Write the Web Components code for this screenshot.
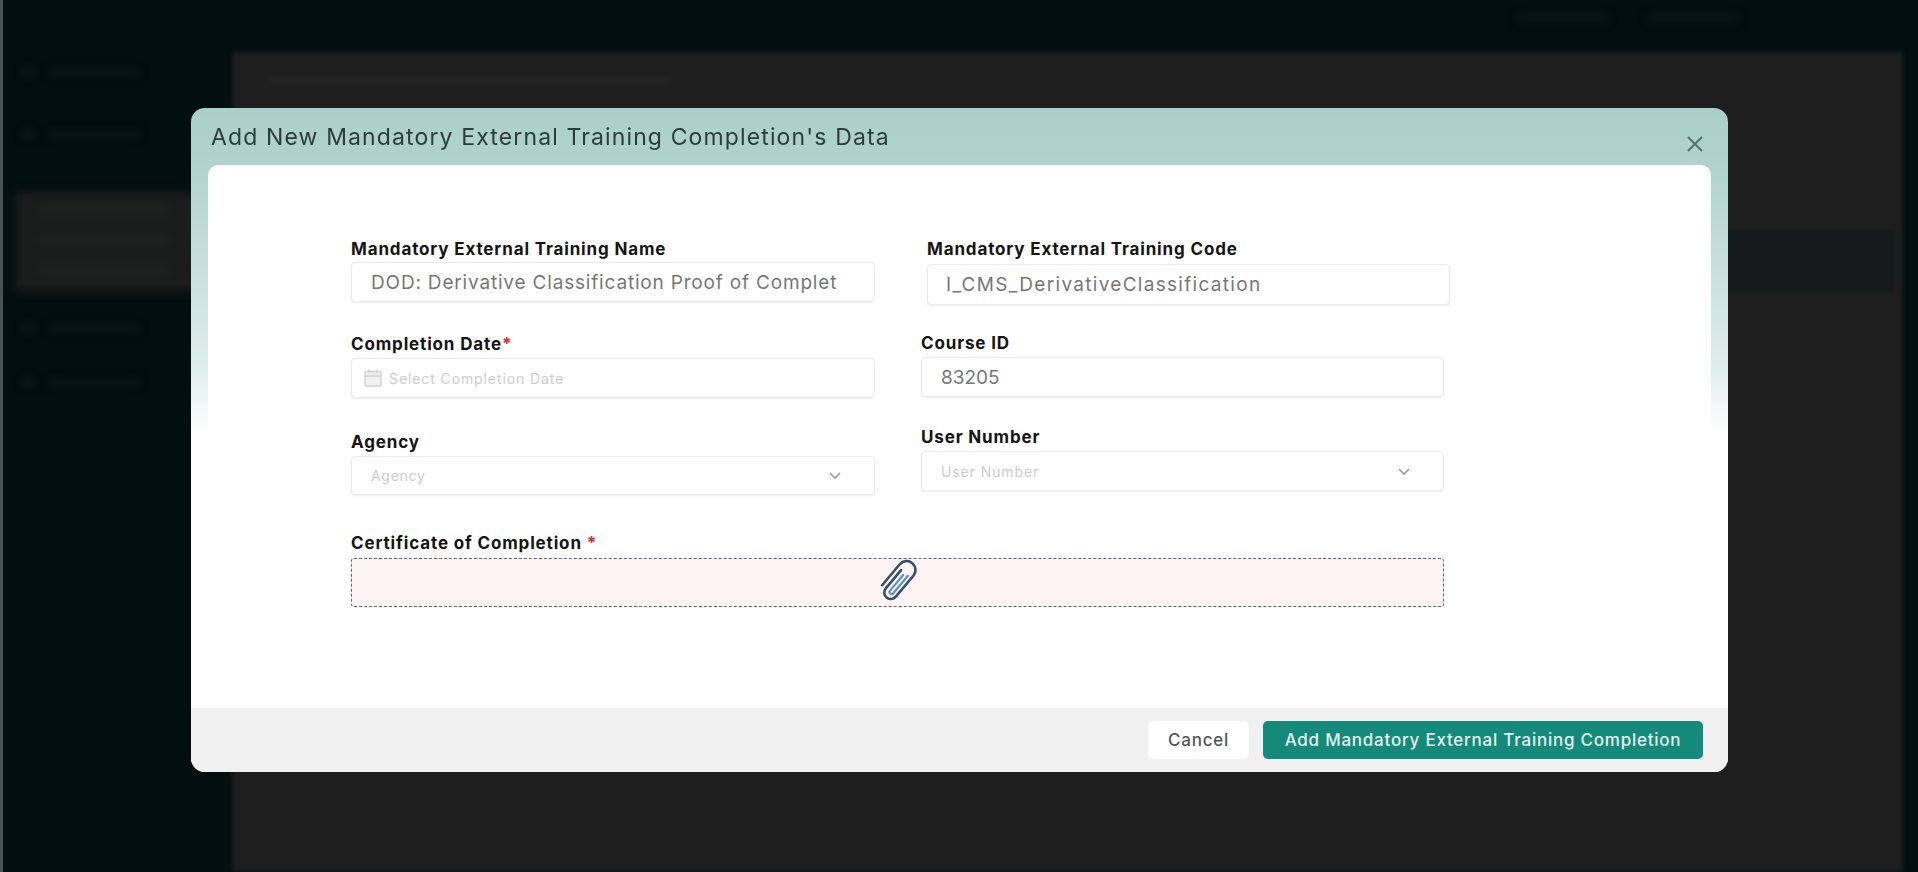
<!DOCTYPE html>
<html>
<head>
<meta charset="utf-8">
<title>Add New Mandatory External Training Completion's Data</title>
<style>
  html, body { margin: 0; height: 100%; background: #020e0f; overflow: hidden; }
  body { font-family: Inter, "Liberation Sans", sans-serif; }
</style>
</head>
<body>
<app-shell></app-shell>
<training-dialog>
  <form-field slot="left" label="Mandatory External Training Name" value="DOD: Derivative Classification Proof of Complet" style="--label-h:25px;--box-h:40px;--value-ls:.82px"></form-field>
  <form-field slot="left" label="Completion Date" required placeholder="Select Completion Date" icon="calendar" style="--top:30px;--box-h:40px;--ph-ls:.9px"></form-field>
  <form-field slot="left" label="Agency" placeholder="Agency" icon="chevron" style="--top:32px;--box-h:39px;--ph-ls:.7px"></form-field>

  <form-field slot="right" label="Mandatory External Training Code" value="I_CMS_DerivativeClassification" style="--label-h:27px;--box-h:41px;--left:6px;--right:-6px;--value-ls:1.3px;--pad:18px"></form-field>
  <form-field slot="right" label="Course ID" value="83205" style="--top:26px;--box-h:40px"></form-field>
  <form-field slot="right" label="User Number" placeholder="User Number" icon="chevron" style="--top:28px;--box-h:40px;--ph-ls:.9px"></form-field>
</training-dialog>

<script>
class AppShell extends HTMLElement {
  constructor() {
    super();
    this.attachShadow({ mode: "open" });
    this.shadowRoot.innerHTML = `<style>
      :host { display: flex; position: fixed; inset: 0; background: #020e0f; }
      .edge { width: 3px; background: #465353; }
      .side { width: 229px; padding-top: 66px; box-sizing: border-box; filter: blur(4px); }
      .nav { display: flex; align-items: center; gap: 16px; height: 12px; padding-left: 20px; }
      .nav i { width: 10px; height: 10px; border-radius: 50%; background: #0f1b1b; }
      .nav b { width: 90px; height: 7px; background: #0a1616; }
      .selected { margin: 52px 0 0 12px; height: 100px; background: #1b1c1c; padding-top: 14px; box-sizing: border-box; }
      .selected b { display: block; width: 130px; height: 8px; margin: 0 0 22px 24px; background: #212121; }
      .main { flex: 1; display: flex; flex-direction: column; }
      .top { height: 52px; display: flex; justify-content: flex-end; gap: 40px; padding: 14px 180px 0 0; box-sizing: border-box; filter: blur(4px); }
      .top b { width: 90px; height: 8px; background: #0a1616; }
      .panel { flex: 1; margin-right: 15px; background: #1e1e1e; padding: 24px 8px 0; filter: blur(2px); }
      .crumb { width: 400px; height: 10px; margin-left: 30px; background: #212121; }
      .band { height: 62px; margin-top: 144px; background: #171a1a; }
    </style>
    <div class="edge"></div>
    <div class="side">
      <div class="nav"><i></i><b></b></div>
      <div class="nav" style="margin-top:50px"><i></i><b></b></div>
      <div class="selected"><b></b><b></b><b></b></div>
      <div class="nav" style="margin-top:30px"><i></i><b></b></div>
      <div class="nav" style="margin-top:42px"><i></i><b></b></div>
    </div>
    <div class="main">
      <div class="top"><b></b><b></b></div>
      <div class="panel"><div class="crumb"></div><div class="band"></div></div>
    </div>`;
  }
}

class FormField extends HTMLElement {
  constructor() {
    super();
    this.attachShadow({ mode: "open" });
  }

  connectedCallback() {
    let label = this.getAttribute("label");
    let value = this.getAttribute("value");
    let placeholder = this.getAttribute("placeholder");
    let icon = this.getAttribute("icon");
    let star = this.hasAttribute("required") ? `<span class="star">*</span>` : "";
    let calendar = `<svg class="cal" width="20" height="20" viewBox="0 0 20 20" fill="#f1f1f1" stroke="#d2d2d2" stroke-width="1.4"><rect x="2" y="3.5" width="16" height="14.5" rx="1.5"/><path d="M2 8h16M6 1.5v4M14 1.5v4"/></svg>`;
    let chevron = `<svg class="chev" width="14" height="9" viewBox="0 0 14 9" fill="none" stroke="#9a9a9a" stroke-width="1.6"><path d="M2 2l5 5 5-5"/></svg>`;
    this.shadowRoot.innerHTML = `<style>
      :host { display: block; margin-top: var(--top, 0); margin-left: var(--left, 0); margin-right: var(--right, 0); }
      .label { height: var(--label-h, 26px); line-height: 24px; font-size: 17px; font-weight: 700; color: #141414; letter-spacing: .85px; white-space: nowrap; }
      .star { color: #d32f2f; }
      .box { box-sizing: border-box; height: var(--box-h, 40px); display: flex; align-items: center; padding: 0 32px 0 var(--pad, 19px); background: #fff; border: 1px solid #ececec; border-radius: 4px; box-shadow: 0 1px 2px rgba(0,0,0,.07); }
      .value { flex: 1; font-size: 19px; color: #777; letter-spacing: var(--value-ls, 0); white-space: nowrap; overflow: hidden; }
      .ph { flex: 1; font-size: 14px; color: #cdcdcd; letter-spacing: var(--ph-ls, 0); white-space: nowrap; }
      .cal { margin: 0 6px 0 -8px; }
    </style>
    <div class="label">${label}${star}</div>
    <div class="box">
      ${icon == "calendar" ? calendar : ""}
      ${value ? `<span class="value">${value}</span>` : `<span class="ph">${placeholder}</span>`}
      ${icon == "chevron" ? chevron : ""}
    </div>`;
  }
}

class TrainingDialog extends HTMLElement {
  constructor() {
    super();
    this.attachShadow({ mode: "open" });
    this.shadowRoot.innerHTML = `<style>
      :host { position: fixed; left: 191px; top: 108px; width: 1537px; height: 664px; display: flex; flex-direction: column; border-radius: 14px; overflow: hidden; background: linear-gradient(#aacfc9 0, #b2d3ce 60px, #dfeeeb 260px, #fff 325px); color: #333; filter: blur(.45px); }
      .head { height: 57px; flex: none; position: relative; padding: 14px 0 0 20px; box-sizing: border-box; }
      .title { font-size: 23px; line-height: 30px; color: #2b3d3b; letter-spacing: 1.13px; white-space: nowrap; font-weight: 400; }
      .close { position: absolute; right: 24px; top: 27px; width: 18px; height: 18px; }
      .body { flex: 1; margin: 0 17px; background: #fff; border-radius: 10px 10px 0 0; padding: 72px 0 0 143px; }
      .cols { display: grid; grid-template-columns: 524px 523px; column-gap: 46px; }
      .col { display: flex; flex-direction: column; }
      .cert { margin-top: 37px; width: 1093px; }
      .cert-label { height: 26px; line-height: 22px; font-size: 17px; font-weight: 700; color: #141414; letter-spacing: .85px; }
      .star { color: #d32f2f; }
      .drop { box-sizing: border-box; height: 49px; background: #fdf3f2; border: 1px dashed #6d6480; border-radius: 3px; display: flex; align-items: center; justify-content: center; }
      .foot { height: 64px; flex: none; background: #f0f0f0; display: flex; align-items: center; justify-content: flex-end; gap: 14px; padding-right: 25px; }
      button { font-family: inherit; font-size: 17px; font-weight: 500; letter-spacing: .76px; border: 0; border-radius: 5px; height: 38px; padding: 0; }
      .cancel { width: 101px; background: #fff; color: #555; }
      .add { width: 440px; background: #15897a; color: #e6f5f2; }
    </style>
    <div class="head">
      <div class="title">Add New Mandatory External Training Completion's Data</div>
      <svg class="close" viewBox="0 0 18 18" fill="none" stroke="#4f6f6c" stroke-width="1.8"><path d="M2 2l14 14M16 2L2 16"/></svg>
    </div>
    <div class="body">
      <div class="cols">
        <div class="col"><slot name="left"></slot></div>
        <div class="col"><slot name="right"></slot></div>
      </div>
      <div class="cert">
        <div class="cert-label">Certificate of Completion <span class="star">*</span></div>
        <div class="drop">
          <svg width="50" height="50" viewBox="0 0 42 42" fill="none" stroke-linecap="round">
            <g transform="rotate(40 21 21)">
              <path d="M16 12v20a5.5 5.5 0 0 0 11 0V9a7.5 7.5 0 0 0-15 0v23" transform="translate(0 -1)" stroke="#33506f" stroke-width="2.2"/>
              <path d="M20 13v18a2 2 0 0 0 3.5 0V11" stroke="#5f8fc4" stroke-width="1.8"/>
            </g>
          </svg>
        </div>
      </div>
    </div>
    <div class="foot">
      <button class="cancel">Cancel</button>
      <button class="add">Add Mandatory External Training Completion</button>
    </div>`;
  }
}

customElements.define("app-shell", AppShell);
customElements.define("form-field", FormField);
customElements.define("training-dialog", TrainingDialog);
</script>
</body>
</html>
